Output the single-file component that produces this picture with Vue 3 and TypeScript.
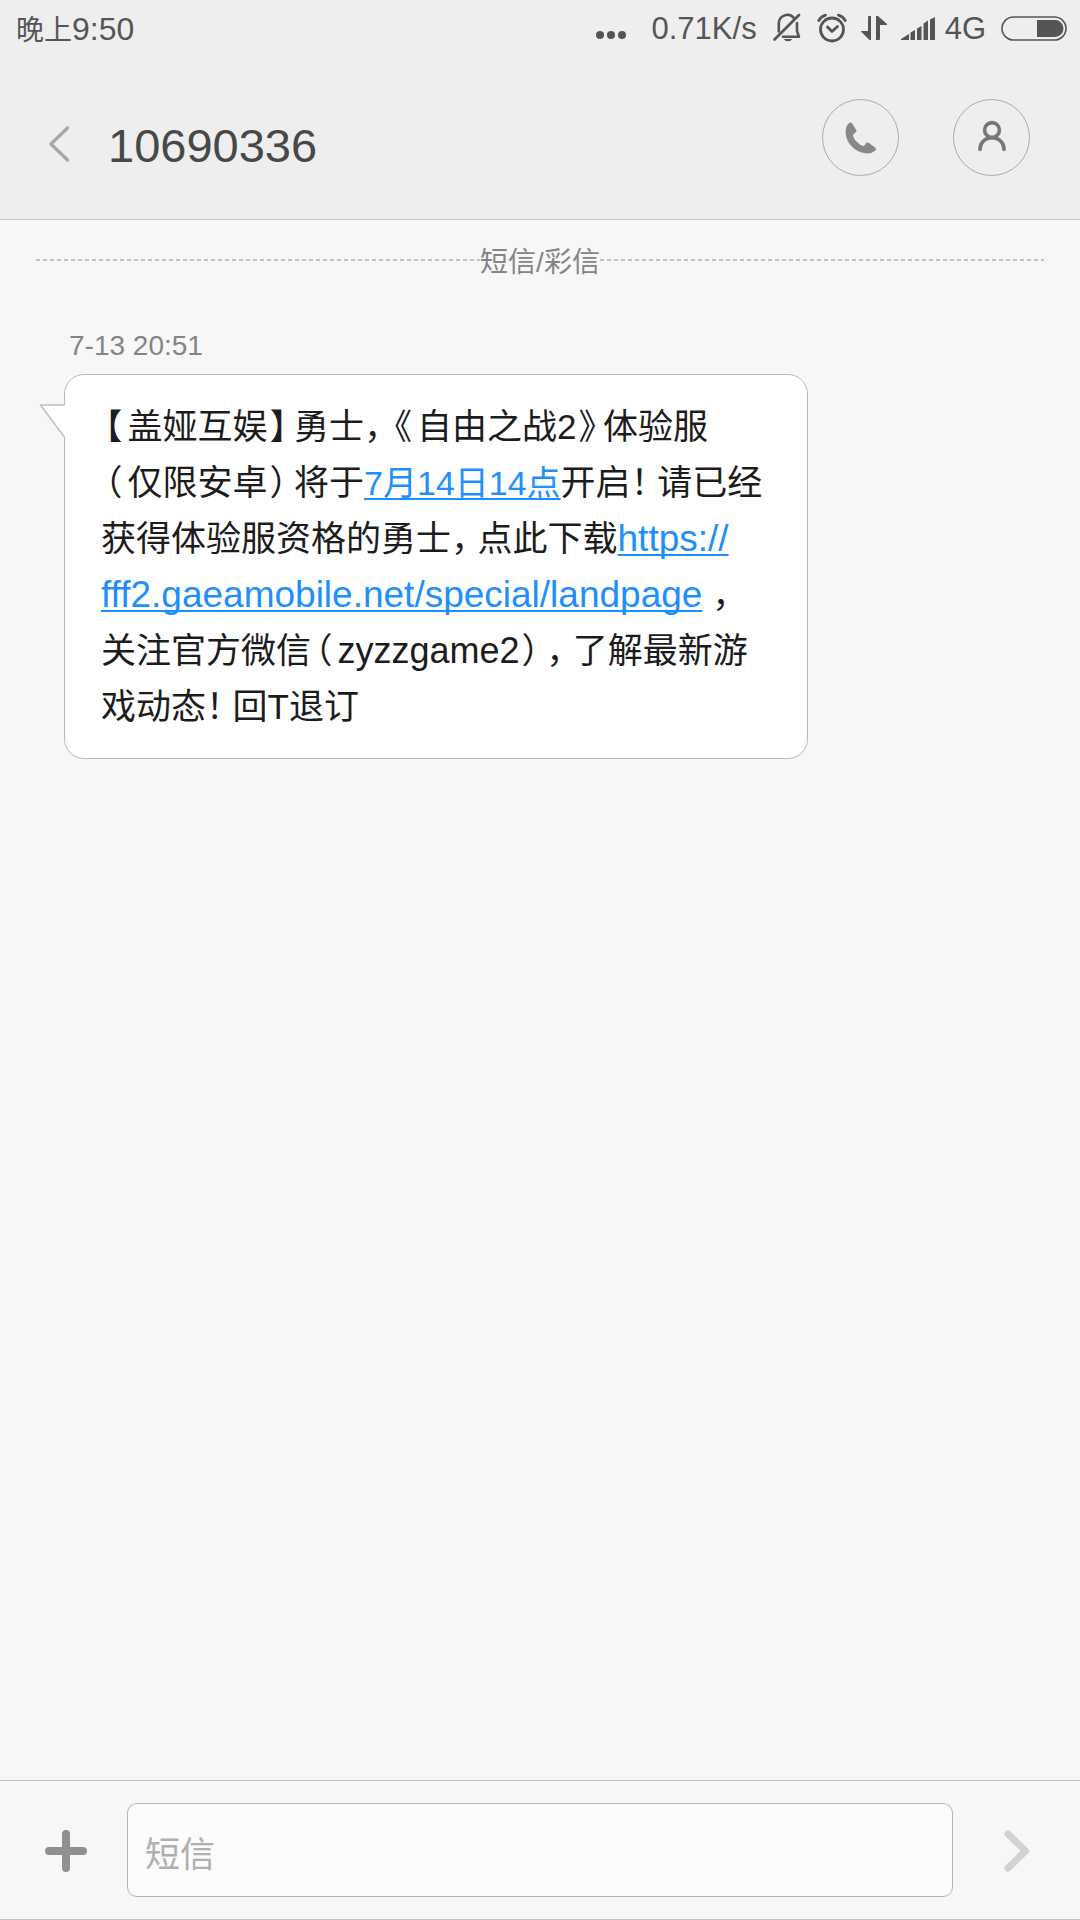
<script setup lang="ts">
import { ref } from 'vue'

interface Part {
  text: string
  kind: 'text' | 'open' | 'close' | 'stop' | 'latin' | 'date' | 'url'
}

const sender = '10690336'
const draft = ref('')

const lines: Part[][] = [
  [
    { text: '【', kind: 'open' },
    { text: '盖娅互娱', kind: 'text' },
    { text: '】', kind: 'close' },
    { text: '勇士', kind: 'text' },
    { text: '，', kind: 'stop' },
    { text: '《', kind: 'open' },
    { text: '自由之战2', kind: 'text' },
    { text: '》', kind: 'close' },
    { text: '体验服', kind: 'text' },
  ],
  [
    { text: '（', kind: 'open' },
    { text: '仅限安卓', kind: 'text' },
    { text: '）', kind: 'close' },
    { text: '将于', kind: 'text' },
    { text: '7月14日14点', kind: 'date' },
    { text: '开启', kind: 'text' },
    { text: '！', kind: 'stop' },
    { text: '请已经', kind: 'text' },
  ],
  [
    { text: '获得体验服资格的勇士', kind: 'text' },
    { text: '，', kind: 'stop' },
    { text: '点此下载', kind: 'text' },
    { text: 'https://', kind: 'url' },
  ],
  [
    { text: 'fff2.gaeamobile.net/special/landpage', kind: 'url' },
    { text: ' ', kind: 'text' },
    { text: '，', kind: 'stop' },
  ],
  [
    { text: '关注官方微信', kind: 'text' },
    { text: '（', kind: 'open' },
    { text: 'zyzzgame2', kind: 'latin' },
    { text: '）', kind: 'close' },
    { text: '，', kind: 'stop' },
    { text: '了解最新游', kind: 'text' },
  ],
  [
    { text: '戏动态', kind: 'text' },
    { text: '！', kind: 'stop' },
    { text: '回T退订', kind: 'text' },
  ],
]

const hrefs: Record<string, string> = {
  date: '#calendar',
  url: 'https://fff2.gaeamobile.net/special/landpage',
}
</script>

<template>
  <div class="screen">
    <header class="top">
      <div class="status">
        <span class="clock"><span class="period">晚上</span>9:50</span>
        <div class="indicators">
          <svg class="dots" width="30" height="10" viewBox="0 0 30 10" fill="#555">
            <circle cx="4" cy="5" r="4" /><circle cx="15" cy="5" r="4" /><circle cx="26" cy="5" r="4" />
          </svg>
          <span class="speed">0.71K/s</span>
          <svg class="bell" width="28" height="30" viewBox="0 0 28 30" fill="none" stroke="#555" stroke-width="2.6" stroke-linecap="round" stroke-linejoin="round">
            <path d="M1.500 26.500 26 2" />
            <path d="M5.800 18.500V11a8.600 8.600 0 0 1 15-6.200" />
            <path d="M24 10v8l2 5.800H10" />
            <path d="M11 26h8c-1 3-7 3-8 0z" fill="#555" stroke="none" />
          </svg>
          <svg class="alarm" width="30" height="30" viewBox="0 0 30 30" fill="none" stroke="#555" stroke-width="2.8" stroke-linecap="round" stroke-linejoin="round">
            <circle cx="15" cy="16.5" r="11.5" />
            <path d="m10.500 14 4.500 4.500 5.500-5" />
            <path d="M1.800 7.500Q4 3.500 8.500 2.200M21.500 2.200Q26 3.500 28.200 7.500" />
          </svg>
          <svg class="data" width="26" height="24" viewBox="0 0 26 24" fill="#555">
            <path d="M7 1q0-1 1-1h2v24H8.500L0 15.500V15h7zM15 0h2l9 8v1h-7v14q0 1-1 1h-3z" />
          </svg>
          <svg class="signal" width="34" height="23" viewBox="0 0 34 23" fill="#555">
            <path d="M0 23v-1l8-5v6zM9.500 15.500l4.500-2.500v10h-4.500zM16 11.500l4.500-2.500v14H16zM22.500 6.500l4.500-3v19.500h-4.500zM29 2.500l5-2.500v23h-5z" />
          </svg>
          <span class="network">4G</span>
          <svg class="battery" width="66" height="25" viewBox="0 0 66 25">
            <rect x="1" y="1" width="64" height="23" rx="11.5" fill="none" stroke="#555" stroke-width="1.6" />
            <path d="M36 4h18a8.500 8.500 0 0 1 0 17H36z" fill="#555" />
          </svg>
        </div>
      </div>
      <div class="bar">
        <button class="back" type="button" aria-label="返回">
          <svg width="22" height="36" viewBox="0 0 22 36" fill="none" stroke="#a6a6a6" stroke-width="3.2" stroke-linecap="round" stroke-linejoin="round">
            <path d="M19.500 2 3 18l16.500 16" />
          </svg>
        </button>
        <h1 class="sender">{{ sender }}</h1>
        <button class="round" type="button" aria-label="拨打电话">
          <svg width="32" height="32" viewBox="0 0 32 32" fill="#88888b">
            <path d="M4.300.800Q6.300 0 7.500 2L11.300 8Q12 9.500 10.500 10.500L8 12.700Q7.800 15.500 11.500 19.500 16 24 19 24L21.200 21Q22.500 20 24 21L30 25.500Q31.800 27 30.500 28.500 26.500 32 20.500 31.300 12.500 30.500 6.500 24.300 1 18.500.600 10.500.500 4 4.300.800z" />
          </svg>
        </button>
        <button class="round" type="button" aria-label="联系人">
          <svg class="person" width="28" height="32" viewBox="0 0 28 32" fill="none" stroke="#777" stroke-width="3.6">
            <circle cx="14" cy="10" r="7.4" />
            <path d="M2 29.500C2 22.500 7 17.800 14 17.800s12 4.700 12 11.700" stroke-linecap="round" />
          </svg>
        </button>
      </div>
    </header>

    <main class="thread">
      <div class="divider">
        <svg class="rule" height="2"><line x1="0" y1="1" x2="100%" y2="1" /></svg>
        <span>短信/彩信</span>
        <svg class="rule" height="2"><line x1="0" y1="1" x2="100%" y2="1" /></svg>
      </div>
      <time class="stamp">7-13 20:51</time>
      <article class="bubble">
        <svg class="tail" width="27" height="36" viewBox="0 0 27 36">
          <path d="M27 2H1.500L25 33.500H27z" fill="#fff" />
          <path d="M25 2H1.500L25 33.500" fill="none" stroke="#c0c0c0" stroke-width="1.5" stroke-linejoin="round" />
        </svg>
        <p v-for="(line, i) in lines" :key="i" class="line">
          <template v-for="(part, j) in line" :key="j">
            <a v-if="part.kind === 'date' || part.kind === 'url'" :href="hrefs[part.kind]" :class="part.kind">{{ part.text }}</a>
            <span v-else :class="part.kind">{{ part.text }}</span>
          </template>
        </p>
      </article>
    </main>

    <form class="composer" @submit.prevent>
      <button class="plus" type="button" aria-label="添加">
        <svg width="42" height="42" viewBox="0 0 42 42" fill="none" stroke="#909094" stroke-width="8" stroke-linecap="round">
          <path d="M21 4v34M4 21h34" />
        </svg>
      </button>
      <input v-model="draft" class="field" type="text" placeholder="短信" aria-label="短信" />
      <button class="send" type="submit" aria-label="发送">
        <svg width="26" height="42" viewBox="0 0 26 42" fill="none" stroke="#d2d2d2" stroke-width="7" stroke-linecap="round" stroke-linejoin="round">
          <path d="m4 4 17.500 17L4 38" />
        </svg>
      </button>
    </form>
  </div>
</template>

<style>
body {
  margin: 0;
  background: #f7f7f7;
}
</style>

<style scoped>
.screen {
  display: flex;
  flex-direction: column;
  min-height: 100vh;
  box-sizing: border-box;
  border-bottom: 1px solid #c4c4c4;
  background: #f7f7f7;
  font-family: "Liberation Sans", "Noto Sans CJK SC", sans-serif;
}

svg {
  display: block;
  flex: none;
}

button {
  display: flex;
  align-items: center;
  justify-content: center;
  padding: 0;
  border: 0;
  background: none;
}

.top {
  background: #eee;
  border-bottom: 1px solid #c4c4c4;
}

.status {
  display: flex;
  justify-content: space-between;
  height: 56px;
  padding: 0 13px 0 16px;
  color: #555;
  font-size: 31px;
  line-height: 58px;
}

.clock {
  font-size: 32px;
}

.period {
  font-size: 28px;
}

.indicators {
  display: flex;
  align-items: center;
}

.dots {
  margin: 14px 26px 0 0;
}

.speed,
.bell {
  margin-right: 16px;
}

.alarm,
.data {
  margin-right: 14px;
}

.signal {
  margin-right: 10px;
}

.network {
  margin-right: 15px;
}

.speed,
.network {
  padding-top: 2px;
}

.bar {
  display: flex;
  align-items: center;
  height: 163px;
  padding: 0 50px 0 36px;
}

.back {
  width: 46px;
  height: 78px;
  margin-top: 12px;
}

.sender {
  flex: 1;
  margin: 16px 0 0 26px;
  color: #484848;
  font-size: 47px;
  font-weight: 400;
  line-height: 64px;
}

.round {
  width: 77px;
  height: 77px;
  margin-left: 54px;
  border: 1px solid #aaa;
  border-radius: 50%;
}

.person {
  margin-bottom: 4px;
}

.thread {
  display: flex;
  flex: 1;
  flex-direction: column;
  align-items: flex-start;
  padding: 22px 36px;
}

.divider {
  display: flex;
  align-items: center;
  align-self: stretch;
  color: #858585;
  font-size: 28px;
  line-height: 42px;
}

.rule {
  flex: 1;
  width: 0;
  margin-bottom: 6px;
  stroke: #909090;
  stroke-width: 1;
  stroke-dasharray: 4 3;
}

.stamp {
  margin: 41px 0 7px 33px;
  color: #858585;
  font-size: 28px;
  line-height: 42px;
}

.bubble {
  position: relative;
  box-sizing: border-box;
  width: 744px;
  max-width: 100%;
  margin-left: 28px;
  padding: 24px 36px 23px;
  border: 1px solid #b8b8b8;
  border-radius: 20px;
  background: #fff;
}

.tail {
  position: absolute;
  top: 28px;
  left: -26px;
}

.line {
  height: 56px;
  margin: 0;
  color: #1c1c1c;
  font-size: 35px;
  line-height: 56px;
  white-space: pre;
}

.open,
.close,
.stop {
  font-feature-settings: "halt";
}

.open {
  padding: 0 5px 0 4px;
}

.close {
  padding: 0 7px 0 2px;
}

.stop {
  padding-right: 9px;
}

.latin {
  font-size: 36px;
}

.date,
.url {
  color: #1e8fff;
  text-decoration-thickness: 2px;
  text-decoration-skip-ink: none;
  text-underline-offset: 3px;
}

.date {
  font-size: 34px;
}

.url {
  font-size: 37px;
}

.composer {
  display: flex;
  align-items: center;
  height: 138px;
  border-top: 1px solid #c4c4c4;
}

.plus,
.send {
  width: 127px;
  height: 94px;
}

.plus {
  box-sizing: border-box;
  padding: 2px 0 0 5px;
}

.send {
  box-sizing: border-box;
  padding-top: 2px;
}

.field {
  flex: 1;
  min-width: 0;
  height: 94px;
  box-sizing: border-box;
  padding: 10px 17px 0;
  border: 1px solid #b4b4b4;
  border-radius: 10px;
  background: #fcfcfc;
  color: #1c1c1c;
  font: 35px "Liberation Sans", "Noto Sans CJK SC", sans-serif;
}

.field::placeholder {
  color: #b0b0b0;
  opacity: 1;
}
</style>
